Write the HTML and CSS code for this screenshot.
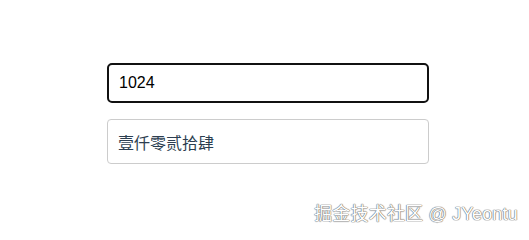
FILE: index.html
```html
<!DOCTYPE html>
<html lang="zh">
<head>
<meta charset="utf-8">
<title>数字转大写</title>
<link rel="stylesheet" href="styles.css">
</head>
<body>
<main class="page">
  <div class="field field-input">1024</div>
  <div class="field field-output">壹仟零贰拾肆</div>
</main>
<div class="watermark">掘金技术社区 @ JYeontu</div>
</body>
</html>
```
FILE: styles.css
```css
html, body {
  margin: 0;
  padding: 0;
  background: #ffffff;
}
body {
  width: 529px;
  height: 234px;
  position: relative;
  overflow: hidden;
  font-family: "Liberation Sans", Arial, "Noto Sans CJK SC", sans-serif;
}
.page {
  display: flex;
  flex-direction: column;
  gap: 16px;
  padding: 63px 0 0 107px;
  width: 322px;
}
.field {
  box-sizing: border-box;
  width: 322px;
  display: flex;
  align-items: center;
  font-size: 16px;
}
.field-input {
  height: 40px;
  border: 2px solid #111111;
  border-radius: 5px;
  padding-left: 10px;
  color: #000000;
}
.field-output {
  height: 45px;
  border: 1px solid #cccccc;
  border-radius: 4px;
  padding-left: 10px;
  color: #2c3e50;
  font-family: "Noto Sans CJK SC", sans-serif;
}
.watermark {
  position: absolute;
  right: 11px;
  top: 203px;
  font-size: 18px;
  line-height: 22px;
  letter-spacing: 0.2px;
  color: #ffffff;
  font-family: "Liberation Sans", Arial, "Noto Sans CJK SC", sans-serif;
  text-shadow: 0 0 1px #666, 0 0 1px #666, 0 0 1px #888;
  white-space: nowrap;
}
```
